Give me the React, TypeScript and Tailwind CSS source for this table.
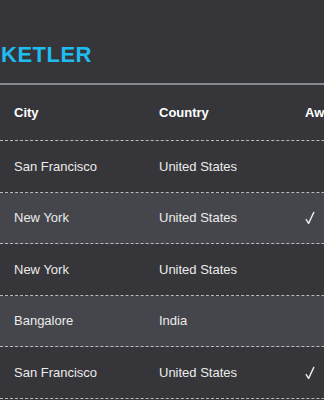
import React from "react";

type Row = { city: string; country: string; awarded: boolean };

const rows: Row[] = [
  { city: "San Francisco", country: "United States", awarded: false },
  { city: "New York", country: "United States", awarded: true },
  { city: "New York", country: "United States", awarded: false },
  { city: "Bangalore", country: "India", awarded: false },
  { city: "San Francisco", country: "United States", awarded: true },
];

const rowHeights = ["h-[52px]", "h-[51px]", "h-[52px]", "h-[51px]", "h-[52px]"];

function Check() {
  return (
    <svg width="10" height="14" viewBox="0 0 10 14" fill="none" className="block">
      <path
        d="M1.2 8.6 L3.6 12.4 L8.8 1.4"
        stroke="#ebebeb"
        strokeWidth="1.4"
        strokeLinecap="round"
        strokeLinejoin="round"
      />
    </svg>
  );
}

export default function App() {
  return (
    <div
      className="w-[324px] h-[400px] overflow-hidden bg-[#36353a] text-[13px]"
      style={{ fontFamily: '"Liberation Sans", Arial, sans-serif' }}
    >
      <div className="pt-[42px] pb-[16px] pl-[1px]">
        <h1 className="text-[22px] leading-[25px] font-bold tracking-[0.5px] text-[#1fbcf2]">KETLER</h1>
      </div>
      <div className="h-[2px] w-full bg-[#868b91]" />
      <div className="w-[440px]">
        <div className="flex h-[56px] items-center border-b border-dashed border-[#b9bbbe] font-bold text-white">
          <div className="w-[145px] pl-[14px]">City</div>
          <div className="w-[146px] pl-[14px]">Country</div>
          <div className="w-[146px] pl-[14px]">Awarded</div>
        </div>
        {rows.map((r, i) => (
          <div
            key={i}
            className={`flex items-center border-b border-dashed border-[#b9bbbe] text-[#ebebeb] ${rowHeights[i]} ${
              i % 2 === 1 ? "bg-[#45464b]" : ""
            }`}
          >
            <div className="w-[145px] pl-[14px]">{r.city}</div>
            <div className="w-[146px] pl-[14px]">{r.country}</div>
            <div className="w-[146px] pl-[14px]">{r.awarded ? <Check /> : null}</div>
          </div>
        ))}
      </div>
    </div>
  );
}
